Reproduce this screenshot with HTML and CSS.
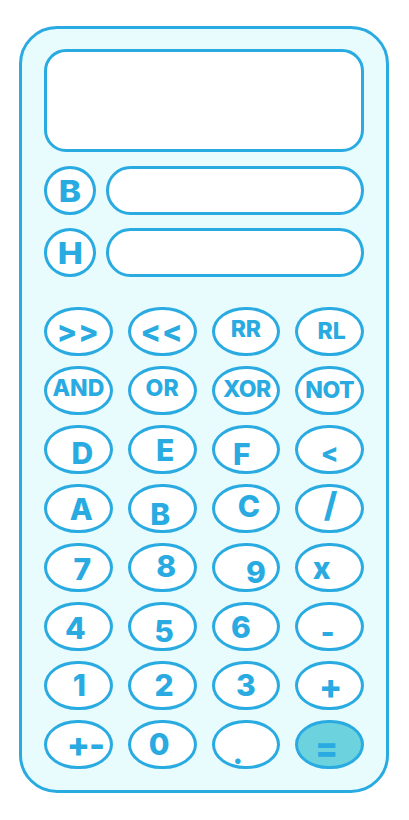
FILE: index.html
```html
<!DOCTYPE html>
<html lang="en">
<head>
<meta charset="utf-8">
<title>Programmer Calculator</title>
<link rel="stylesheet" href="styles.css">
</head>
<body>
<div class="calc">
  <div class="display"></div>
  <div class="base-row">
    <div class="base-tag"><span>B</span></div>
    <div class="base-field"></div>
  </div>
  <div class="base-row">
    <div class="base-tag"><span>H</span></div>
    <div class="base-field"></div>
  </div>
  <div class="keys">
    <div class="key op"><span class="l-shr">&gt;&gt;</span></div>
    <div class="key op"><span class="l-shl">&lt;&lt;</span></div>
    <div class="key op"><span class="l-rr">RR</span></div>
    <div class="key op"><span class="l-rl">RL</span></div>

    <div class="key op"><span class="l-and">AND</span></div>
    <div class="key op"><span class="l-or">OR</span></div>
    <div class="key op"><span class="l-xor">XOR</span></div>
    <div class="key op"><span class="l-not">NOT</span></div>

    <div class="key"><span class="l-d">D</span></div>
    <div class="key"><span class="l-e">E</span></div>
    <div class="key"><span class="l-f">F</span></div>
    <div class="key small"><span class="l-lt">&lt;</span></div>

    <div class="key"><span class="l-a">A</span></div>
    <div class="key"><span class="l-b">B</span></div>
    <div class="key"><span class="l-c">C</span></div>
    <div class="key"><span class="l-div">/</span></div>

    <div class="key"><span class="l-7">7</span></div>
    <div class="key"><span class="l-8">8</span></div>
    <div class="key"><span class="l-9">9</span></div>
    <div class="key"><span class="l-x">x</span></div>

    <div class="key"><span class="l-4">4</span></div>
    <div class="key"><span class="l-5">5</span></div>
    <div class="key"><span class="l-6">6</span></div>
    <div class="key small"><span class="l-min">-</span></div>

    <div class="key"><span class="l-1">1</span></div>
    <div class="key"><span class="l-2">2</span></div>
    <div class="key"><span class="l-3">3</span></div>
    <div class="key small"><span class="l-plus">+</span></div>

    <div class="key small"><span class="l-pm">+-</span></div>
    <div class="key"><span class="l-0">0</span></div>
    <div class="key"><span class="l-dot">.</span></div>
    <div class="key equals"><span class="l-eq">=</span></div>
  </div>
</div>
</body>
</html>
```
FILE: styles.css
```css
* { box-sizing: border-box; }

body {
  margin: 0;
  background: #ffffff;
  font-family: Inter, "DejaVu Sans", sans-serif;
  font-weight: 800;
  color: #29abe2;
}

.calc {
  margin: 26px 0 0 19px;
  width: 370px;
  height: 767px;
  border: 3px solid #29abe2;
  border-radius: 38px;
  background: #e8fcfe;
  padding: 20px 22px 20px 22px;
  display: flex;
  flex-direction: column;
}

.display {
  height: 103px;
  border: 3px solid #29abe2;
  border-radius: 22px;
  background: #ffffff;
  margin-bottom: 14px;
}

.base-row {
  display: flex;
  gap: 10px;
  height: 49px;
  margin-bottom: 13px;
}

.base-row + .base-row {
  margin-bottom: 30px;
}

.base-tag {
  width: 52px;
  height: 49px;
  border: 3px solid #29abe2;
  border-radius: 50%;
  background: #ffffff;
  display: flex;
  align-items: center;
  justify-content: center;
  font-size: 30px;
  line-height: 1;
}

.base-tag span { transform: scaleX(1.12); }

.base-field {
  flex: 1;
  border: 3px solid #29abe2;
  border-radius: 25px;
  background: #ffffff;
}

.keys {
  display: grid;
  grid-template-columns: repeat(4, 1fr);
  grid-auto-rows: 49px;
  column-gap: 15px;
  row-gap: 10px;
}

.key {
  border: 3px solid #29abe2;
  border-radius: 34px / 25px;
  background: #ffffff;
  display: flex;
  align-items: center;
  justify-content: center;
  font-size: 30px;
  line-height: 1;
}

.key span { display: block; }

.key.op { font-size: 23px; }
.key.small { font-size: 34px; }

.key.equals {
  background: #6cd3de;
}

/* label offsets, as drawn in the reference */
.l-shr { font-size: 30px; letter-spacing: 1px; translate: 0 -1px; }
.l-shl { font-size: 30px; letter-spacing: 1px; translate: 0 -1px; }
.l-rr { translate: 0 -2px; }
.l-rl { translate: 2px 0; }
.l-and { translate: 0 -2px; }
.l-or { translate: 0 -2px; }
.l-xor { translate: 1px -1px; letter-spacing: -0.5px; }
.l-not { letter-spacing: -0.5px; }
.l-d { translate: 4px 3px; }
.l-e { translate: 3px 0; }
.l-f { translate: -4px 4px; }
.l-lt { translate: 0 3px; font-size: 26px; }
.l-a { translate: 3px 0; }
.l-b { translate: -2px 5px; }
.l-c { translate: 3px -3px; }
.l-div { translate: 1px -4px; font-size: 34px; }
.l-7 { translate: 4px 1px; }
.l-8 { translate: 4px -2px; }
.l-9 { translate: 10px 4px; }
.l-x { translate: -8px 0; }
.l-4 { translate: -3px 1px; }
.l-5 { translate: 2px 4px; }
.l-6 { translate: -5px 0; }
.l-min { translate: -2px 5px; font-size: 30px; }
.l-1 { translate: 1px -1px; }
.l-2 { translate: 2px -1px; }
.l-3 { translate: 0 -1px; }
.l-plus { translate: 1px 1px; }
.l-pm { translate: 7px 0; letter-spacing: -1px; }
.l-0 { translate: -3px -1px; }
.l-dot { translate: -8px 8px; }
.l-eq { translate: -3px 3px; font-size: 34px; }
```
